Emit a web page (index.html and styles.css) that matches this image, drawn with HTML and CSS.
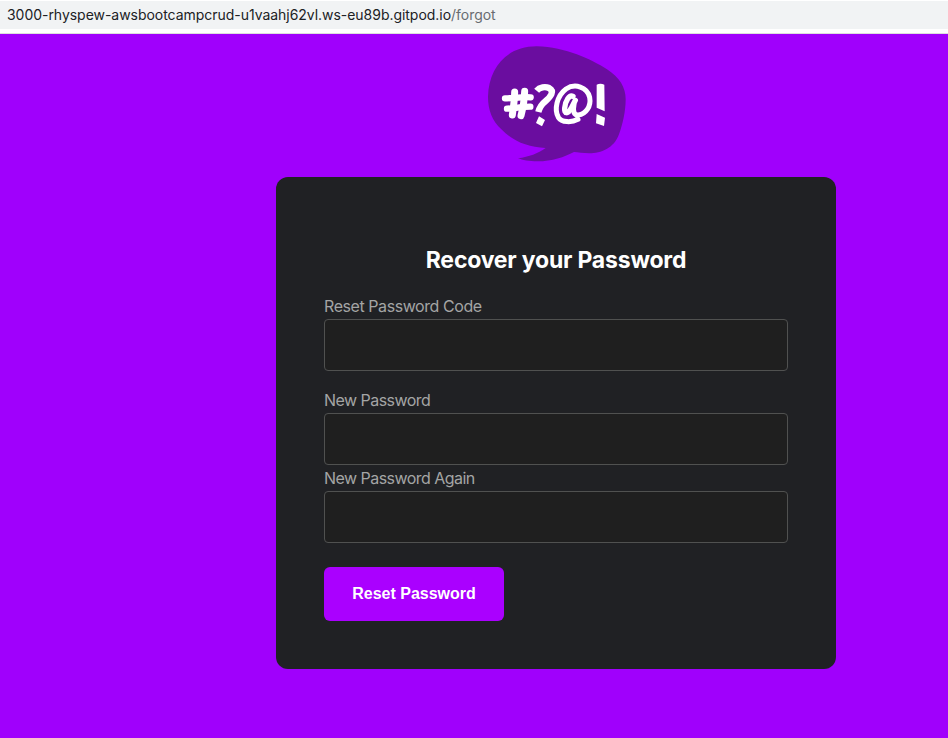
FILE: index.html
```html
<!DOCTYPE html>
<html lang="en">
<head>
<meta charset="utf-8">
<title>Recover your Password</title>
<link rel="stylesheet" href="styles.css">
</head>
<body>
<header class="address-bar"><span class="host">3000-rhyspew-awsbootcampcrud-u1vaahj62vl.ws-eu89b.gitpod.io</span><span class="path">/forgot</span></header>
<main class="page">
  <div class="recover">
    <svg class="logo" viewBox="0 0 480 408" aria-hidden="true">
      <path fill="#6a0d9f" d="M182 31C270 34 345 69 393 100C431 125 449 154 449 190C449 225 440 266 429 295C414 337 375 352 340 352C322 352 305 348 294 348C265 363 229 376 184 376C160 376 139 372 126 367C160 362 185 353 209 336C155 333 112 317 76 280C48 253 36 222 36 182C38 95 92 31 182 31Z"/>
      <g fill="none" stroke="#fff" stroke-linejoin="round">
        <path stroke-width="19" stroke-linecap="round" d="M87 187C110 187 138 182 164 184M93 218C115 218 138 212 163 212"/>
        <path stroke-width="21" stroke-linecap="round" d="M116 168Q116 190 109 237M146 166Q145 200 135 239"/>
        <path stroke-width="19" d="M182 164C191 153 208 151 219 156C237 166 224 182 209 195C199 203 191 212 187 228"/>
        <path stroke-width="15" stroke-linecap="round" d="M306 250C287 260 257 260 247 244C234 221 242 180 270 159C297 141 334 153 341 184C346 211 330 234 307 237C294 238 290 226 294 206"/>
        <path stroke-width="16" stroke-linecap="round" d="M291 181C280 175 268 194 266 216C264 235 276 234 285 218L298 193"/>
      </g>
      <path fill="#fff" d="M189 241L207 252L198 271L180 261ZM362 146Q373 141 385 146L386 226L362 215ZM362 234L387 245L384 270L360 262Z"/>
    </svg>
    <form class="card">
      <h2>Recover your Password</h2>
      <div class="fields">
        <div class="field spaced"><label for="code">Reset Password Code</label><input id="code" type="text"></div>
        <div class="field"><label for="password">New Password</label><input id="password" type="password"></div>
        <div class="field"><label for="again">New Password Again</label><input id="again" type="password"></div>
      </div>
      <button type="button">Reset Password</button>
    </form>
  </div>
</main>
</body>
</html>
```
FILE: styles.css
```css
* { box-sizing: border-box; }
body {
  margin: 0;
  display: flex;
  flex-direction: column;
  height: 738px;
  overflow: hidden;
  background: #fff;
  font-family: Inter, "Liberation Sans", sans-serif;
}
.address-bar {
  height: 28px;
  margin: 1px 0 4px;
  padding-left: 7px;
  background: #f1f3f4;
  color: #202124;
  font-size: 14px;
  letter-spacing: -0.035px;
  line-height: 28px;
  white-space: nowrap;
}
.path { color: #686c70; }
.page {
  flex: 1;
  border-top: 1px solid #dedede;
  background: #a000fc;
}
.recover {
  display: flex;
  flex-direction: column;
  align-items: center;
  width: 560px;
  margin-left: 276px;
  padding-top: 2px;
}
.logo {
  display: block;
  width: 160px;
  height: 136px;
  margin-bottom: 5px;
}
.card {
  width: 560px;
  height: 492px;
  padding: 65px 48px 48px;
  border-radius: 12px;
  background: #202124;
}
h2 {
  margin: 0 0 19px;
  color: #fff;
  font-size: 23px;
  font-weight: 700;
  letter-spacing: -0.2px;
  line-height: 36px;
  text-align: center;
}
.field { display: flex; flex-direction: column; }
.spaced { margin-bottom: 16px; }
label {
  height: 22px;
  color: #a4a5a5;
  font-size: 16px;
  letter-spacing: -0.43px;
  line-height: 19px;
}
input {
  width: 100%;
  height: 52px;
  padding: 16px;
  border: 1px solid #505150;
  border-radius: 4px;
  background: #1f1f1f;
  color: #fff;
  font: inherit;
}
.field + .field label {
  height: 26px;
  letter-spacing: -0.54px;
  line-height: 27px;
}
button {
  display: block;
  width: 180px;
  height: 54px;
  margin-top: 24px;
  padding: 0;
  border: 0;
  border-radius: 6px;
  background: #aa00ff;
  color: #fff;
  font: bold 16px "Liberation Sans", sans-serif;
}
```
